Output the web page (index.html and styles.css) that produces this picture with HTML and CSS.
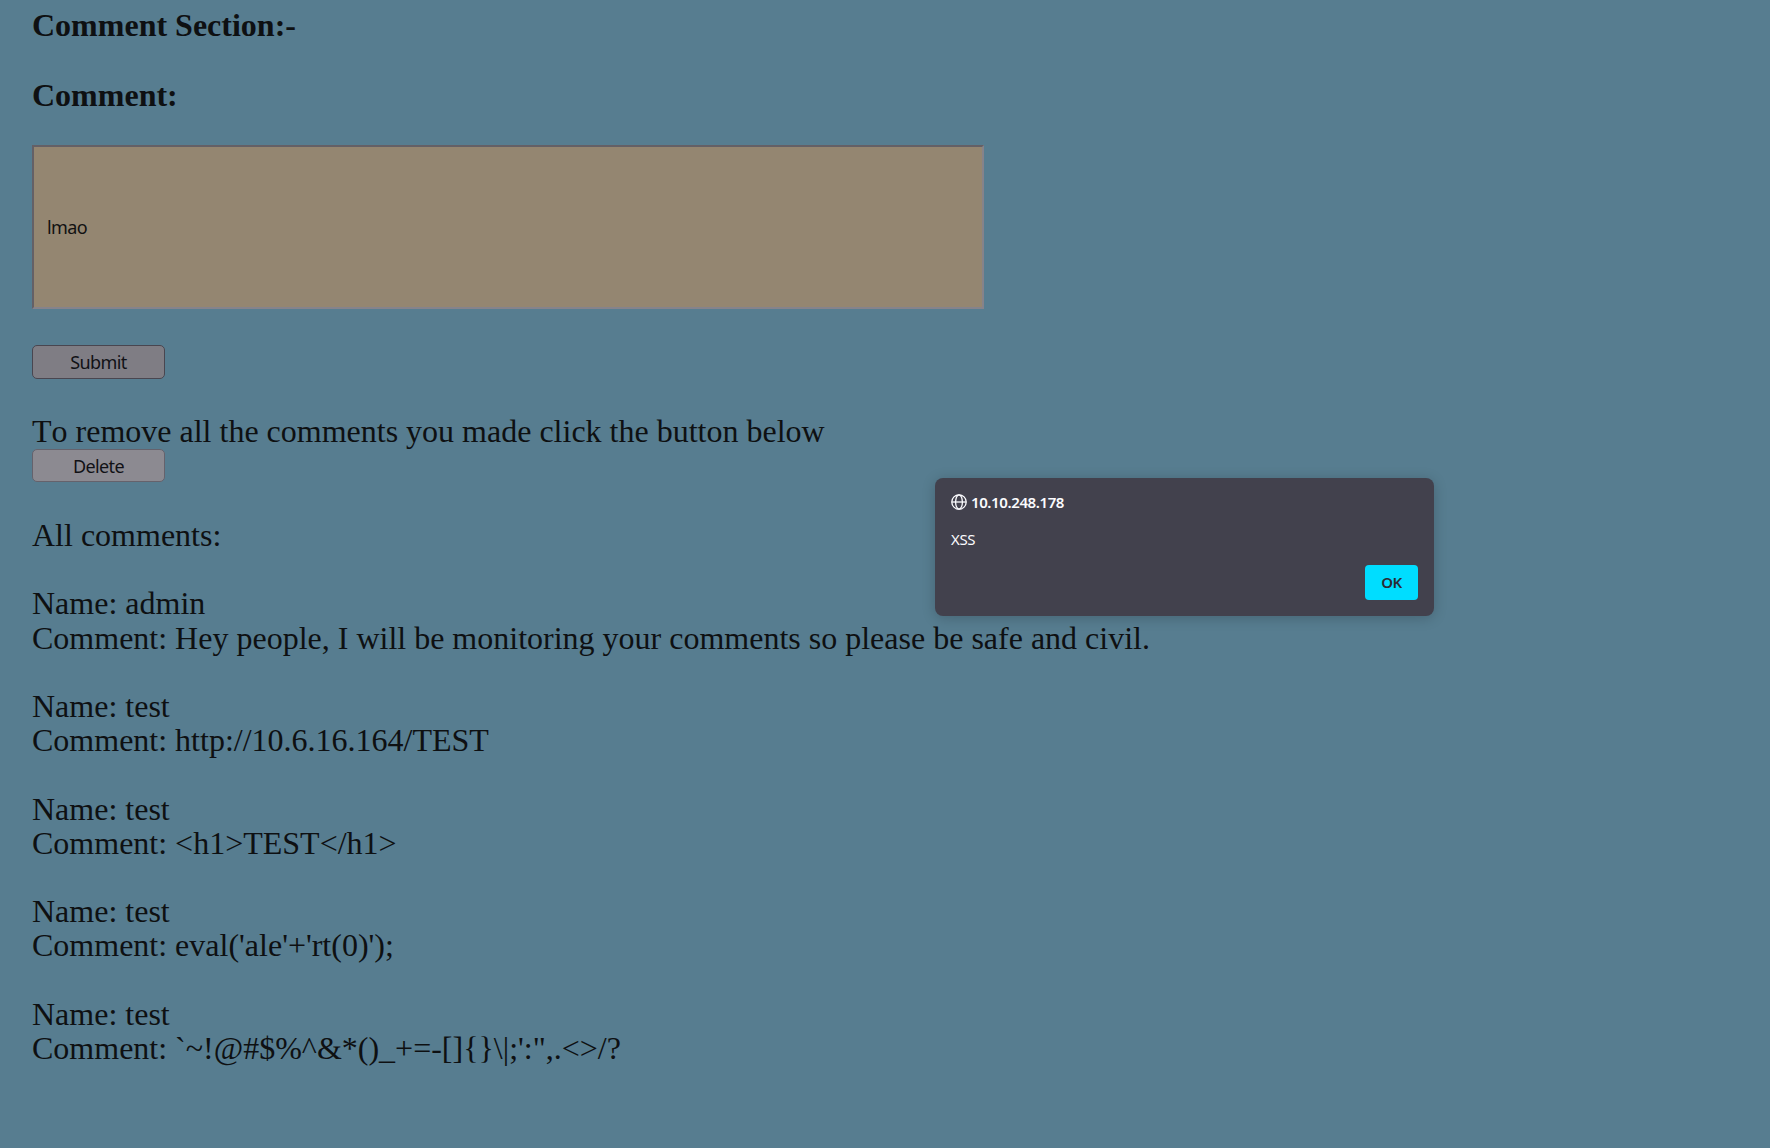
FILE: index.html
```html
<!DOCTYPE html>
<html lang="en">
<head>
<meta charset="utf-8">
<title>Comments</title>
<link rel="stylesheet" href="styles.css">
</head>
<body>
<main class="page">
<h2 class="heading">Comment Section:-</h2>
<h2 class="heading">Comment:</h2>
<form class="form">
<input class="field" type="text" value="lmao">
<button class="button" type="button">Submit</button>
</form>
<p class="note">To remove all the comments you made click the button below</p>
<button class="button delete" type="button">Delete</button>
<p class="all">All comments:</p>
<section class="comments">
<p>Name: admin<br>Comment: Hey people, I will be monitoring your comments so please be safe and civil.</p>
<p>Name: test<br>Comment: http://10.6.16.164/TEST</p>
<p>Name: test<br>Comment: &lt;h1&gt;TEST&lt;/h1&gt;</p>
<p>Name: test<br>Comment: eval('ale'+'rt(0)');</p>
<p>Name: test<br>Comment: `~!@#$%^&amp;*()_+=-[]{}\|;':",.&lt;&gt;/?</p>
</section>
</main>
<div class="dialog" role="alertdialog">
<div class="origin">
<svg class="globe" viewBox="0 0 16 16" fill="none" stroke="currentColor" stroke-width="1.3"><circle cx="8" cy="8" r="7.2"/><ellipse cx="8" cy="8" rx="3.4" ry="7.2"/><path d="M.8 8h14.4"/></svg>
<span>10.10.248.178</span>
</div>
<div class="message">XSS</div>
<button class="ok" type="button">OK</button>
</div>
</body>
</html>
```
FILE: styles.css
```css
* { box-sizing: border-box; }
body { margin: 0; height: 1148px; overflow: hidden; background: #577d90; color: #0e1012; font: 32px/34.2px "Liberation Serif", serif; }
.page { padding: 8px 32px; }
.heading { margin: 0 0 35px; font-size: 32px; line-height: 35px; font-weight: bold; }
.form { display: flex; flex-direction: column; align-items: flex-start; gap: 36px; margin-top: -3px; }
.field { width: 952px; height: 164px; padding: 0 13px; border: 2px solid; border-color: #646066 #85838b #85838b #646066; background: #948671; color: #111; font: 18px "Noto Sans", sans-serif; letter-spacing: -0.6px; }
.button { display: block; width: 133px; height: 34px; padding: 0; border: 1px solid #494650; border-radius: 5px; background: #7f7d84; color: #111116; font: 18px "Noto Sans", sans-serif; letter-spacing: -0.6px; }
.note { margin: 35px 0 1px; font-kerning: none; }
.delete { height: 33px; border-color: #65626c; background: #8c8a91; }
.all { margin: 36px 0 34px; }
.comments { display: flex; flex-direction: column; gap: 34.2px; }
.comments p { margin: 0; }
.dialog { position: absolute; left: 935px; top: 478px; width: 499px; height: 138px; padding: 15px 16px 16px; display: flex; flex-direction: column; border-radius: 8px; background: #42414d; color: #fbfbfe; font: 15px/18px "Noto Sans", sans-serif; letter-spacing: -0.4px; box-shadow: 0 2px 14px #0003; }
.origin { display: flex; align-items: center; gap: 4px; font-weight: 600; }
.globe { width: 16px; height: 16px; }
.message { margin-top: 19px; }
.ok { align-self: flex-end; margin-top: 17px; width: 53px; height: 35px; padding: 0 0 2px; border: 0; border-radius: 4px; background: #00ddff; color: #2b2a33; font: 600 15px "Noto Sans", sans-serif; letter-spacing: -0.4px; }
```
